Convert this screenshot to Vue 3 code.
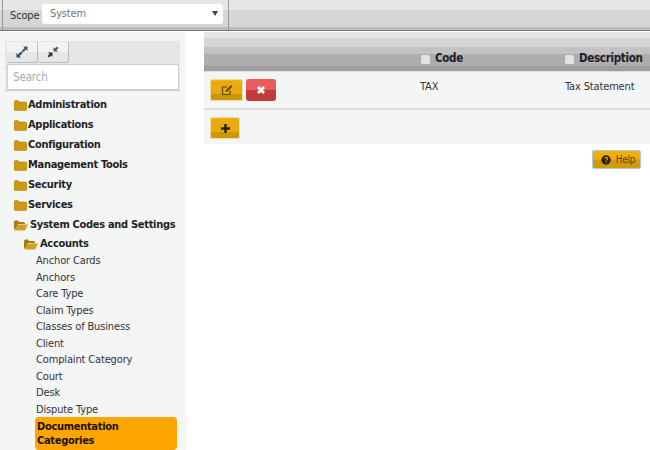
<script setup>
const topItems = ['Administration', 'Applications', 'Configuration', 'Management Tools', 'Security', 'Services']
const leaves = ['Anchor Cards', 'Anchors', 'Care Type', 'Claim Types', 'Classes of Business', 'Client', 'Complaint Category', 'Court', 'Desk', 'Dispute Type']
</script>

<template>
  <div class="page">
    <header class="topbar">
      <div class="scope">
        <span class="scope-label">Scope</span>
        <div class="select"><span>System</span><i class="caret"></i></div>
      </div>
    </header>
    <div class="body">
      <aside class="side">
        <div class="tools">
          <div class="tool-row">
            <button class="tool">
              <svg width="12" height="12" viewBox="0 0 12 12"><path d="M7 .5h4.500V5L10 3.500 7 6.500 5.500 5 8.500 2z" fill="#555"/><path d="M5 11.500H.5V7L2 8.500 5 5.500 6.500 7 3.500 10z" fill="#27496d"/></svg>
            </button>
            <button class="tool">
              <svg width="12" height="12" viewBox="0 0 12 12"><path d="M11.500 2 9.500 4 11 5.500H6.500V1L8 2.500 10 .5z" fill="#555"/><path d="M.5 10l2-2L1 6.500h4.500V11L4 9.500 2 11.500z" fill="#27364d"/></svg>
            </button>
          </div>
          <div class="search">Search</div>
        </div>
        <ul class="tree">
          <li v-for="t in topItems" :key="t" class="top">
            <svg class="folder" width="13" height="11" viewBox="0 0 13 11"><path d="M0 2q0-1.500 1.500-1.500h2.500l1 1.500h6.500q1.500 0 1.500 1.500v5.500q0 1.500-1.500 1.500h-10q-1.500 0-1.500-1.500z" fill="#cc9a14" stroke="#a57c12" stroke-width=".5"/></svg>
            {{ t }}
          </li>
          <li class="top open">
            <svg class="folder wide" width="14" height="11" viewBox="0 0 14 11"><path d="M0 2q0-1.500 1.500-1.500h2.500l1 1.500h4.500q1.500 0 1.500 1.500v.5H4L1.500 9 0 9.500z" fill="#a67c10"/><path d="M3.500 4.500H14L11 10.500H.5z" fill="#d0a020"/></svg>
            System Codes and Settings
          </li>
          <li class="top sub">
            <svg class="folder wide" width="14" height="11" viewBox="0 0 14 11"><path d="M0 2q0-1.500 1.500-1.500h2.500l1 1.500h4.500q1.500 0 1.500 1.500v.5H4L1.500 9 0 9.500z" fill="#a67c10"/><path d="M3.500 4.500H14L11 10.500H.5z" fill="#d0a020"/></svg>
            Accounts
          </li>
          <li v-for="l in leaves" :key="l" class="leaf">{{ l }}</li>
          <li class="leaf active">Documentation Categories</li>
        </ul>
      </aside>
      <main class="main">
        <section class="panel">
          <div class="thead">
            <div class="th code"><i class="check"></i>Code</div>
            <div class="th desc"><i class="check"></i>Description</div>
          </div>
          <div class="row">
            <div class="actions">
              <button class="btn amber edit">
                <svg width="12" height="12" viewBox="0 0 12 12"><path d="M9 6.500V10.500H1.500V3H6" fill="none" stroke="#5d4708" stroke-width="1.200"/><path d="M4.500 8 5 6l5-5 1.500 1.500-5 5z" fill="#5d4708"/></svg>
              </button>
              <button class="btn red">
                <svg width="10" height="10" viewBox="0 0 10 10"><path d="M2 2l6 6M8 2l-6 6" stroke="#fff" stroke-width="2.800"/></svg>
              </button>
            </div>
            <div class="cell cell-code">TAX</div>
            <div class="cell cell-desc">Tax Statement</div>
          </div>
          <div class="foot">
            <button class="btn amber add">
              <svg width="11" height="11" viewBox="0 0 11 11"><path d="M5.500 1v9M1 5.500h9" stroke="#2b1f00" stroke-width="2.400"/></svg>
            </button>
          </div>
        </section>
        <div class="help-row">
          <button class="help">
            <svg width="10" height="10" viewBox="0 0 11 11"><circle cx="5.500" cy="5.500" r="5.200" fill="#2d2100"/><path d="M3.900 4.200c0-2 3.300-2 3.300-.1 0 1.200-1.500 1.200-1.500 2.300" fill="none" stroke="#e5a80c" stroke-width="1.200"/><rect x="5" y="7.300" width="1.300" height="1.300" fill="#e5a80c"/></svg>
            Help
          </button>
        </div>
      </main>
    </div>
  </div>
</template>

<style>
html, body { margin: 0; background: #fff; }
</style>

<style scoped>
.page {
  width: 650px;
  height: 450px;
  overflow: hidden;
  font-family: "DejaVu Sans Condensed", "DejaVu Sans", sans-serif;
  font-size: 11px;
  letter-spacing: -0.15px;
  color: #333;
  background: #fff;
}
.topbar {
  height: 30px;
  border-bottom: 1px solid #777;
  background: linear-gradient(#e6e6e6 0, #e6e6e6 10px, #d6d6d6 10px, #d6d6d6 27px, #bdbdbd 27px);
}
.scope {
  width: 227px;
  height: 30px;
  box-sizing: border-box;
  padding-left: 7px;
  border-left: 1px solid #999;
  border-right: 1px solid #999;
  margin-left: 2px;
  display: flex;
  align-items: center;
  gap: 4px;
}
.scope-label { width: 28px; margin-top: 1px; color: #333; }
.select {
  width: 181px;
  height: 20px;
  margin-top: -3px;
  padding: 0 5px 0 8px;
  box-sizing: border-box;
  background: #fff;
  border-radius: 3px;
  display: flex;
  align-items: center;
  justify-content: space-between;
  color: #777;
}
.caret {
  width: 0;
  height: 0;
  border-left: 3px solid transparent;
  border-right: 3px solid transparent;
  border-top: 5px solid #444;
}
.body { display: flex; height: 419px; }
.side {
  width: 186px;
  flex: none;
  margin-top: 1px;
  box-sizing: border-box;
  padding: 9px 6px 0 5px;
  background: #f4f6f6;
}
.tools {
  width: 175px;
  background: #e6e6e6;
  border-bottom: 1px solid #ccc;
  padding: 1px 2px 2px 2px;
  box-sizing: border-box;
  height: 50px;
}
.tool-row { display: flex; }
.tool {
  width: 31px;
  height: 21px;
  padding: 0;
  border: 0;
  border-right: 1px solid #bbb;
  border-bottom: 1px solid #bbb;
  border-radius: 0 0 3px 3px;
  background: linear-gradient(#f2f2f2 0, #f2f2f2 10px, #e6e6e6 10px);
  display: flex;
  align-items: center;
  justify-content: center;
}
.search {
  height: 24px;
  line-height: 24px;
  margin-top: 1px;
  padding-left: 5px;
  background: #fff;
  border: 1px solid #ccc;
  border-radius: 2px;
  color: #aaa;
  font-size: 11.500px;
  width: 165px;
}
.tree { list-style: none; margin: 0; padding: 0; }
.top {
  height: 20px;
  line-height: 20px;
  padding-left: 9px;
  font-weight: bold;
  letter-spacing: -0.3px;
  color: #222;
  display: flex;
  align-items: center;
  gap: 1px;
  white-space: nowrap;
}
.tree > .top:first-child { margin-top: 4px; }
.top.open { gap: 2px; }
.top.sub { padding-left: 19px; gap: 2px; height: 18px; }
.folder { flex: none; }
.leaf {
  height: 16.550px;
  line-height: 16.550px;
  padding-left: 31px;
  color: #333;
  white-space: nowrap;
}
.leaf.active {
  width: 142px;
  height: 33px;
  line-height: 13.500px;
  margin: -1px 0 0 30px;
  padding: 3px 0 0 2px;
  white-space: normal;
  box-sizing: border-box;
  background: #ffa500;
  border-radius: 4px;
  font-weight: bold;
  letter-spacing: -0.3px;
  color: #1a1200;
}
.main { flex: 1; padding: 1px 0 0 18px; min-width: 0; }
.panel { background: #f4f6f6; height: 112px; }
.thead {
  height: 39px;
  position: relative;
  background: linear-gradient(#e6e6e6 0, #e6e6e6 6px, #d4d4d4 6px, #d4d4d4 15px, #c2c2c2 15px, #c2c2c2 22px, #aeaeae 22px, #aeaeae 34px, #9e9e9e 34px);
  border-bottom: 1px solid #ddd;
}
.th {
  position: absolute;
  top: 19px;
  font-weight: bold;
  color: #1c1c28;
  font-size: 11.500px;
  letter-spacing: -0.3px;
  display: flex;
  align-items: center;
  gap: 5px;
}
.code { left: 217px; }
.desc { left: 361px; }
.check {
  width: 9px;
  height: 9px;
  margin-top: 2px;
  background: #e4e4e4;
  border-radius: 2px;
}
.row {
  height: 36px;
  display: flex;
  border-bottom: 2px solid #ddd;
}
.actions { display: flex; gap: 3px; padding: 7px 0 0 6px; width: 216px; box-sizing: border-box; }
.btn {
  height: 22px;
  padding: 0;
  border: 0;
  border-radius: 3px;
  display: flex;
  align-items: center;
  justify-content: center;
}
.amber {
  background: linear-gradient(#ffb000 0, #ffb000 2px, #e8aa0c 2px, #e8aa0c 15px, #cc9605 15px);
  box-shadow: 0 0 0 1px #ecdcaa inset;
}
.red { width: 30px; background: linear-gradient(#e85c5c 0, #e85c5c 11px, #c03c3c 11px); }
.edit { width: 33px; }
.add { width: 30px; }
.cell { padding-top: 8px; color: #333; }
.cell-code { width: 145px; }
.foot { padding: 7px 0 0 6px; }
.help-row { display: flex; justify-content: flex-end; padding: 6px 9px 0 0; }
.help {
  width: 49px;
  height: 19px;
  padding: 0 0 0 3px;
  border: 1px solid #a6cbe6;
  border-radius: 2px;
  background: linear-gradient(#f2b200 0, #e8aa0c 9px, #d19a06 9px);
  display: flex;
  align-items: center;
  justify-content: center;
  gap: 5px;
  font-family: inherit;
  font-size: 10px;
  letter-spacing: -0.2px;
  color: #5a4808;
}
</style>
